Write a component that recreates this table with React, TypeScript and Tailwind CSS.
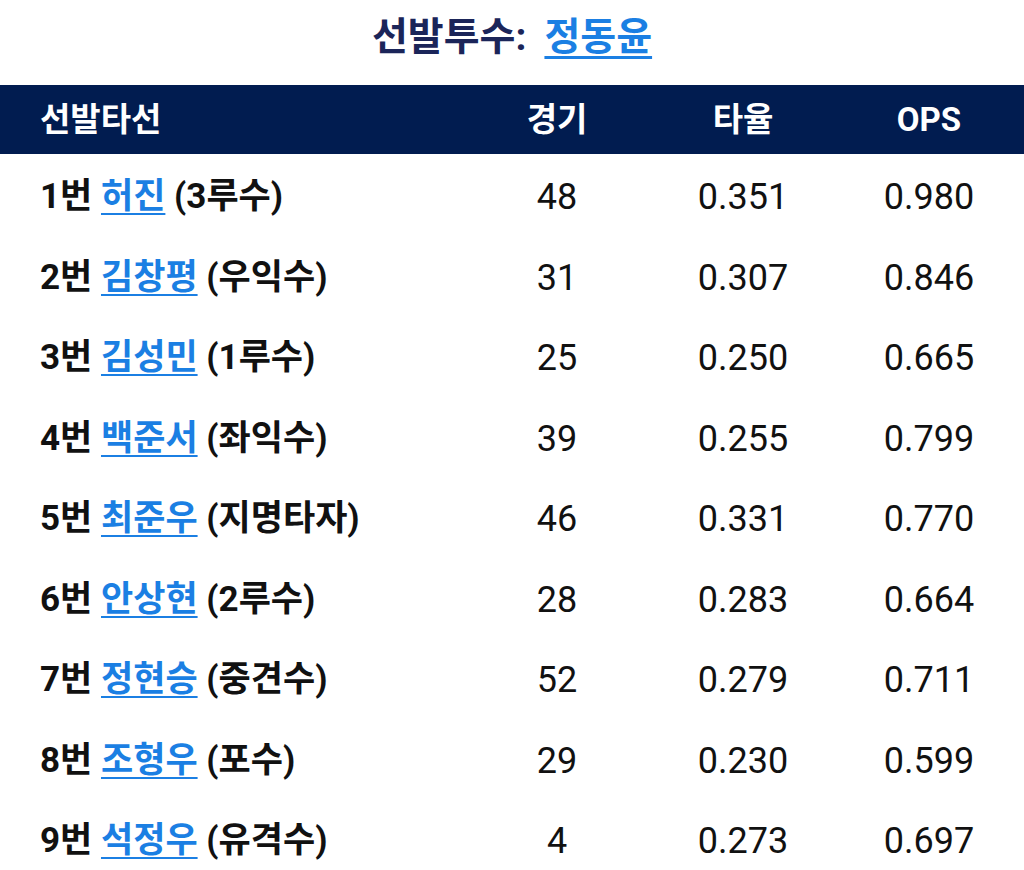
const rows = [
  { no: "1번", name: "허진", pos: "3루수", g: "48", avg: "0.351", ops: "0.980" },
  { no: "2번", name: "김창평", pos: "우익수", g: "31", avg: "0.307", ops: "0.846" },
  { no: "3번", name: "김성민", pos: "1루수", g: "25", avg: "0.250", ops: "0.665" },
  { no: "4번", name: "백준서", pos: "좌익수", g: "39", avg: "0.255", ops: "0.799" },
  { no: "5번", name: "최준우", pos: "지명타자", g: "46", avg: "0.331", ops: "0.770" },
  { no: "6번", name: "안상현", pos: "2루수", g: "28", avg: "0.283", ops: "0.664" },
  { no: "7번", name: "정현승", pos: "중견수", g: "52", avg: "0.279", ops: "0.711" },
  { no: "8번", name: "조형우", pos: "포수", g: "29", avg: "0.230", ops: "0.599" },
  { no: "9번", name: "석정우", pos: "유격수", g: "4", avg: "0.273", ops: "0.697" },
];

export default function App() {
  return (
    <div
      className="w-[1024px] h-[870px] bg-white overflow-hidden"
      style={{ fontFamily: "Roboto, 'Noto Sans CJK KR', sans-serif" }}
    >
      {/* Title */}
      <div className="h-[85px] flex items-center justify-center pb-[10px] text-[39px] font-bold text-[#1b2559]">
        <span>선발투수:</span>
        <a className="ml-[18px] text-[#1b7fe3] underline underline-offset-[6px] decoration-[3px]">
          정동윤
        </a>
      </div>

      {/* Header */}
      <div className="grid grid-cols-[464px_186px_186px_186px] h-[69px] items-center bg-[#011c50] text-white text-[33px] font-bold">
        <div className="pl-[40px]">선발타선</div>
        <div className="text-center">경기</div>
        <div className="text-center">타율</div>
        <div className="text-center">OPS</div>
      </div>

      {/* Rows */}
      <div className="pt-[3px]">
        {rows.map((r) => (
          <div
            key={r.no}
            className="grid grid-cols-[464px_186px_186px_186px] h-[80.5px] items-center text-[36px] text-[#111]"
          >
            <div className="pl-[40px] font-bold text-[35px]">
              {r.no}{" "}
              <a className="text-[#1b7fe3] underline underline-offset-[5px] decoration-[2px]">
                {r.name}
              </a>{" "}
              ({r.pos})
            </div>
            <div className="text-center">{r.g}</div>
            <div className="text-center">{r.avg}</div>
            <div className="text-center">{r.ops}</div>
          </div>
        ))}
      </div>
    </div>
  );
}
